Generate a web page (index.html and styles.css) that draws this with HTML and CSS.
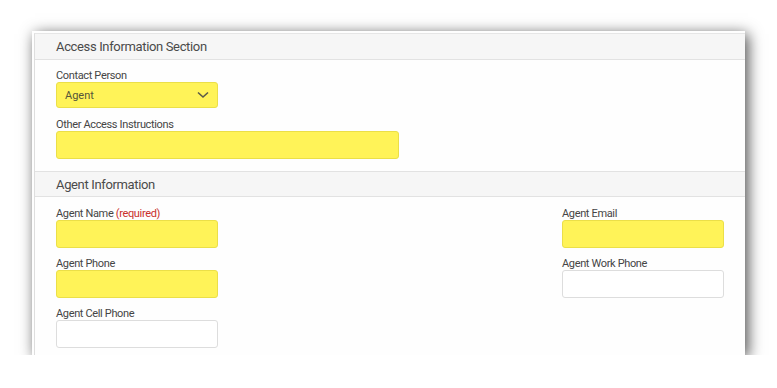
FILE: index.html
```html
<!DOCTYPE html>
<html lang="en">
<head>
    <meta charset="UTF-8">
    <meta name="viewport" content="width=device-width, initial-scale=1.0">
    <title>Access Information</title>
    <link rel="stylesheet" href="styles.css">
</head>
<body>
    <div class="panel">
        <div class="panel-inner">
            <div class="section-head">Access Information Section</div>
            <div class="section-body first">
                <div class="field">
                    <label for="contactPerson">Contact Person</label>
                    <div class="select-box highlight">
                        <span>Agent</span>
                        <svg width="12" height="8" viewBox="0 0 12 8"><path d="M1 1.5 L6 6 L11 1.5" fill="none" stroke="#5a5a4a" stroke-width="1.6"/></svg>
                    </div>
                </div>
                <div class="field">
                    <label for="otherAccess">Other Access Instructions</label>
                    <input type="text" id="otherAccess" class="input wide highlight">
                </div>
            </div>

            <div class="section-head bordered">Agent Information</div>
            <div class="section-body columns">
                <div class="column">
                    <div class="field">
                        <label for="agentName">Agent Name <span class="required">(required)</span></label>
                        <input type="text" id="agentName" class="input highlight">
                    </div>
                    <div class="field">
                        <label for="agentPhone">Agent Phone</label>
                        <input type="text" id="agentPhone" class="input highlight">
                    </div>
                    <div class="field">
                        <label for="agentCell">Agent Cell Phone</label>
                        <input type="text" id="agentCell" class="input">
                    </div>
                </div>
                <div class="column">
                    <div class="field">
                        <label for="agentEmail">Agent Email</label>
                        <input type="text" id="agentEmail" class="input highlight">
                    </div>
                    <div class="field">
                        <label for="agentWork">Agent Work Phone</label>
                        <input type="text" id="agentWork" class="input">
                    </div>
                </div>
            </div>
        </div>
    </div>
</body>
</html>
```

FILE: styles.css
```css
body {
    font-family: Roboto, "Liberation Sans", sans-serif;
    margin: 0;
    padding: 31px 32px 0;
    background-color: #ffffff;
    color: #4a4a4a;
}
.panel {
    background: #fefefe;
    padding: 2px 0 0 2px;
    height: 322px;
    box-shadow: 3px 3px 14px rgba(0,0,0,0.7);
}
.panel-inner {
    height: 100%;
    border-left: 1px solid #dedede;
    border-top: 1px solid #e6e6e6;
    box-sizing: border-box;
}
.section-head {
    background-color: #f6f6f6;
    border-bottom: 1px solid #e2e2e2;
    height: 25px;
    line-height: 25px;
    padding-left: 21px;
    font-size: 13px;
    letter-spacing: -0.35px;
    color: #4a4a4a;
}
.section-head.bordered {
    height: 24px;
    line-height: 25px;
    border-top: 1px solid #e2e2e2;
}
.section-body {
    padding: 10px 21px 0;
}
.section-body.first {
    padding: 9px 21px 12px;
}
.columns {
    display: flex;
    justify-content: space-between;
}
.field {
    margin-bottom: 9px;
}
.first .field {
    margin-bottom: 10px;
}
.first .field:last-child {
    margin-bottom: 0;
}
label {
    display: block;
    font-size: 11px;
    line-height: 13px;
    letter-spacing: -0.35px;
    color: #454545;
}
.required {
    color: #c9302c;
}
.input,
.select-box {
    display: block;
    width: 162px;
    height: 28px;
    padding: 0 8px;
    border: 1px solid #dddddd;
    border-radius: 3px;
    background: #ffffff;
    box-sizing: border-box;
    font-size: 11px;
    font-family: inherit;
}
.wide {
    width: 343px;
}
.highlight {
    background-color: #fff358;
    border-color: #ebdf48;
}
.select-box {
    display: flex;
    align-items: center;
    justify-content: space-between;
    height: 26px;
    color: #55553a;
}
```
